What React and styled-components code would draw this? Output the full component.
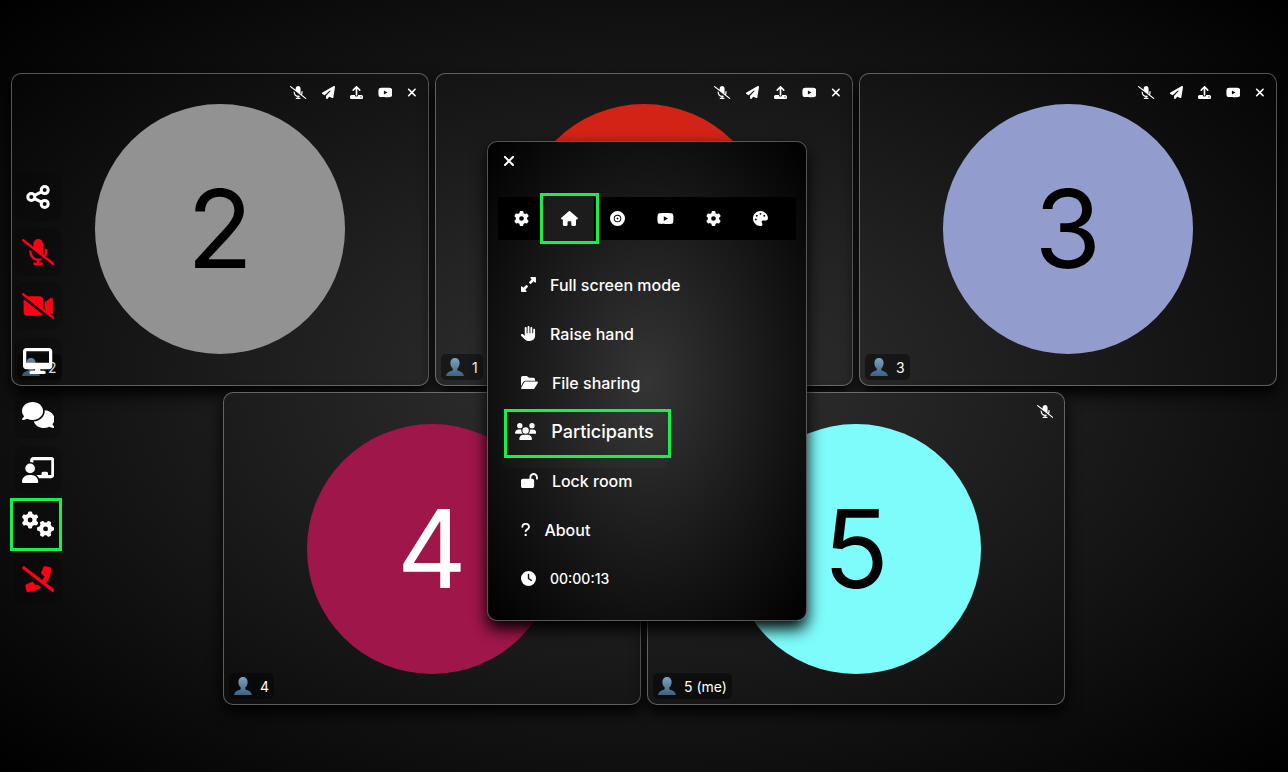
import React from 'react';
import styled, { createGlobalStyle, css } from 'styled-components';
import { IconContext } from 'react-icons';
import {
  FaMicrophoneSlash, FaVideoSlash, FaDesktop, FaComments, FaChalkboardUser, FaGears,
  FaPaperPlane, FaUpload, FaYoutube, FaXmark, FaGear, FaHouse, FaRecordVinyl, FaPalette,
  FaUpRightAndDownLeftFromCenter, FaHand, FaFolderOpen, FaUsers, FaLockOpen, FaQuestion, FaClock,
} from 'react-icons/fa6';
import { FaPhoneSlash } from 'react-icons/fa';

const GlobalStyle = createGlobalStyle`
  * { box-sizing: border-box; }
  body {
    margin: 0;
    background: #000;
    color: #fff;
    font-family: Inter, "Liberation Sans", sans-serif;
  }
  button {
    border: 0;
    padding: 0;
    background: none;
    color: inherit;
    font: inherit;
    cursor: pointer;
  }
  svg { display: block; width: auto; flex: none; }
`;

const Page = styled.div`
  position: relative;
  display: flex;
  flex-direction: column;
  justify-content: center;
  min-height: 100vh;
  background: radial-gradient(#333, #000);
  overflow: hidden;
`;

const TileGrid = styled.main`
  display: flex;
  flex-wrap: wrap;
  justify-content: center;
  gap: 6px;
  padding: 6px 11px 0;
`;

const Tile = styled.section`
  position: relative;
  display: flex;
  align-items: center;
  justify-content: center;
  width: calc((100% - 12px) / 3);
  aspect-ratio: 4 / 3;
  border: 1px solid rgb(255 255 255 / 0.32);
  border-radius: 10px;
  background: radial-gradient(#333, #000) fixed;
  box-shadow: 0 8px 16px #000;
`;

const Avatar = styled.div`
  display: flex;
  align-items: center;
  justify-content: center;
  width: 60%;
  aspect-ratio: 1;
  border-radius: 50%;
  background: ${(p) => p.$bg};
  color: ${(p) => p.$fg || '#000'};
  font-size: 108px;
  line-height: 1;
`;

const TileBar = styled.div`
  position: absolute;
  top: 12px;
  right: 11px;
  display: flex;
  gap: 15px;
  svg { height: 13px; }
`;

const NameTag = styled.div`
  position: absolute;
  left: 5px;
  bottom: 5px;
  display: flex;
  align-items: center;
  gap: 8px;
  height: 26px;
  padding: 0 5px;
  border-radius: 5px;
  background: rgb(0 0 0 / 0.4);
  font-size: 14px;
`;

const Sidebar = styled.nav`
  position: absolute;
  left: 14px;
  top: calc(50% - 213px);
  display: flex;
  flex-direction: column;
  justify-content: space-between;
  height: 430px;
`;

const Highlight = css`
  &::after {
    content: '';
    position: absolute;
    border: 3px solid #17f04b;
  }
`;

const SideButton = styled.button`
  position: relative;
  display: flex;
  align-items: center;
  justify-content: center;
  width: 48px;
  height: 48px;
  border-radius: 10px;
  background: rgb(0 0 0 / 0.15);
  && { color: ${(p) => (p.$danger ? '#ff0015' : '#fff')}; }
  svg { height: ${(p) => (p.$small ? 24 : 26)}px; }
  ${(p) => p.$marked && Highlight}
  &::after { inset: -2px 0 -3px -4px; }
`;

const Panel = styled.aside`
  position: absolute;
  left: calc(50% - 157px);
  top: calc(50% - 245px);
  width: 320px;
  height: 480px;
  padding: 10px;
  border: 1px solid rgb(255 255 255 / 0.32);
  border-radius: 10px;
  background: radial-gradient(#353535, #000);
  box-shadow: 0 8px 16px #000;
`;

const CloseButton = styled.button`
  display: flex;
  margin-left: 5px;
  && { padding: 1px 0; }
  svg { height: 16px; }
`;

const TabBar = styled.div`
  display: flex;
  height: 43px;
  margin-top: 27px;
  background: #000;
`;

const Tab = styled.button`
  position: relative;
  display: flex;
  align-items: center;
  && { padding: 0 16px; background: ${(p) => (p.$marked ? '#1c1c1c' : 'none')}; }
  svg { height: 15px; }
  ${(p) => p.$marked && Highlight}
  &::after { inset: -4px -5px; }
`;

const Menu = styled.div`
  display: flex;
  flex-direction: column;
  align-items: flex-start;
  margin-top: 20px;
  padding-left: 23px;
`;

const MenuItem = styled.button`
  position: relative;
  display: flex;
  align-items: center;
  gap: 14px;
  height: 49px;
  && { font-size: ${(p) => (p.$timer ? 14 : 16)}px; font-weight: 500; }
  svg { height: 15px; }
  ${(p) => p.$marked && css`
    gap: 15px;
    margin-left: -6px;
    && { font-size: 18px; }
    svg { height: 17px; }
    &::before {
      content: '';
      position: absolute;
      inset: 4px -14px -12px -12px;
      border-radius: 5px;
      background: rgb(255 255 255 / 0.02);
    }
    ${Highlight}
    &::after { inset: 2px -17px -2px -11px; }
  `}
`;

function PersonIcon() {
  return (
    <svg height="18" viewBox="0 0 18 18" aria-hidden="true">
      <defs>
        <linearGradient id="person" x1="0" y1="0" x2="0" y2="1">
          <stop offset="0" stopColor="#7ba3c2" />
          <stop offset="1" stopColor="#3f6283" />
        </linearGradient>
      </defs>
      <path
        fill="url(#person)"
        d="M9 0C6 0 4.400 2 4.400 5C4.400 7.300 5.200 9.200 6.700 10.500V12.200C5.600 13.300 1 12.900 0 18H18C17 12.900 12.400 13.300 11.300 12.200V10.500C12.800 9.200 13.600 7.300 13.600 5C13.600 2 12 0 9 0Z"
      />
    </svg>
  );
}

function ShareIcon() {
  return (
    <svg viewBox="0 0 24 24" fill="none" stroke="currentColor" strokeWidth="3" aria-hidden="true">
      <circle cx="5.300" cy="12" r="3.500" />
      <circle cx="18.700" cy="5.100" r="3.500" />
      <circle cx="18.700" cy="18.900" r="3.500" />
      <path d="M8.500 10.400L15.500 6.800M8.500 13.600L15.500 17.200" />
    </svg>
  );
}

const people = [
  { id: 2, bg: '#929292', label: '2', full: true },
  { id: 1, bg: '#d32317', label: '1', full: true },
  { id: 3, bg: '#939dcd', label: '3', full: true },
  { id: 4, bg: '#9f164a', fg: '#fff', label: '4', full: true },
  { id: 5, bg: '#7efbfb', label: '5 (me)', full: false },
];

const tileActions = [
  ['Send message', FaPaperPlane],
  ['Send file', FaUpload],
  ['Share video', FaYoutube],
  ['Remove', FaXmark],
];

const sideActions = [
  { name: 'Share room', Icon: ShareIcon, small: true },
  { name: 'Microphone', Icon: FaMicrophoneSlash, danger: true },
  { name: 'Camera', Icon: FaVideoSlash, danger: true },
  { name: 'Share screen', Icon: FaDesktop },
  { name: 'Chat', Icon: FaComments },
  { name: 'Whiteboard', Icon: FaChalkboardUser },
  { name: 'Settings', Icon: FaGears, marked: true },
  { name: 'Leave', Icon: FaPhoneSlash, danger: true },
];

const tabs = [
  ['Devices', FaGear],
  ['Room', FaHouse],
  ['Recording', FaRecordVinyl],
  ['Video', FaYoutube],
  ['Options', FaGear],
  ['Theme', FaPalette],
];

const menu = [
  ['Full screen mode', FaUpRightAndDownLeftFromCenter],
  ['Raise hand', FaHand],
  ['File sharing', FaFolderOpen],
  ['Participants', FaUsers],
  ['Lock room', FaLockOpen],
  ['About', FaQuestion],
  ['00:00:13', FaClock],
];

export default function App() {
  return (
    <IconContext.Provider value={{ size: 'auto' }}>
      <Page>
        <GlobalStyle />
        <TileGrid>
          {people.map((p) => (
            <Tile key={p.id}>
              <Avatar $bg={p.bg} $fg={p.fg}>{p.id}</Avatar>
              <TileBar>
                <button aria-label="Mute"><FaMicrophoneSlash /></button>
                {p.full && tileActions.map(([name, Icon]) => (
                  <button key={name} aria-label={name}><Icon /></button>
                ))}
              </TileBar>
              <NameTag><PersonIcon />{p.label}</NameTag>
            </Tile>
          ))}
        </TileGrid>
        <Sidebar>
          {sideActions.map(({ name, Icon, danger, small, marked }) => (
            <SideButton key={name} aria-label={name} $danger={danger} $small={small} $marked={marked}>
              <Icon />
            </SideButton>
          ))}
        </Sidebar>
        <Panel>
          <CloseButton aria-label="Close"><FaXmark /></CloseButton>
          <TabBar>
            {tabs.map(([name, Icon]) => (
              <Tab key={name} aria-label={name} $marked={name === 'Room'}><Icon /></Tab>
            ))}
          </TabBar>
          <Menu>
            {menu.map(([name, Icon]) => (
              <MenuItem key={name} $marked={name === 'Participants'} $timer={Icon === FaClock}>
                <Icon />{name}
              </MenuItem>
            ))}
          </Menu>
        </Panel>
      </Page>
    </IconContext.Provider>
  );
}
